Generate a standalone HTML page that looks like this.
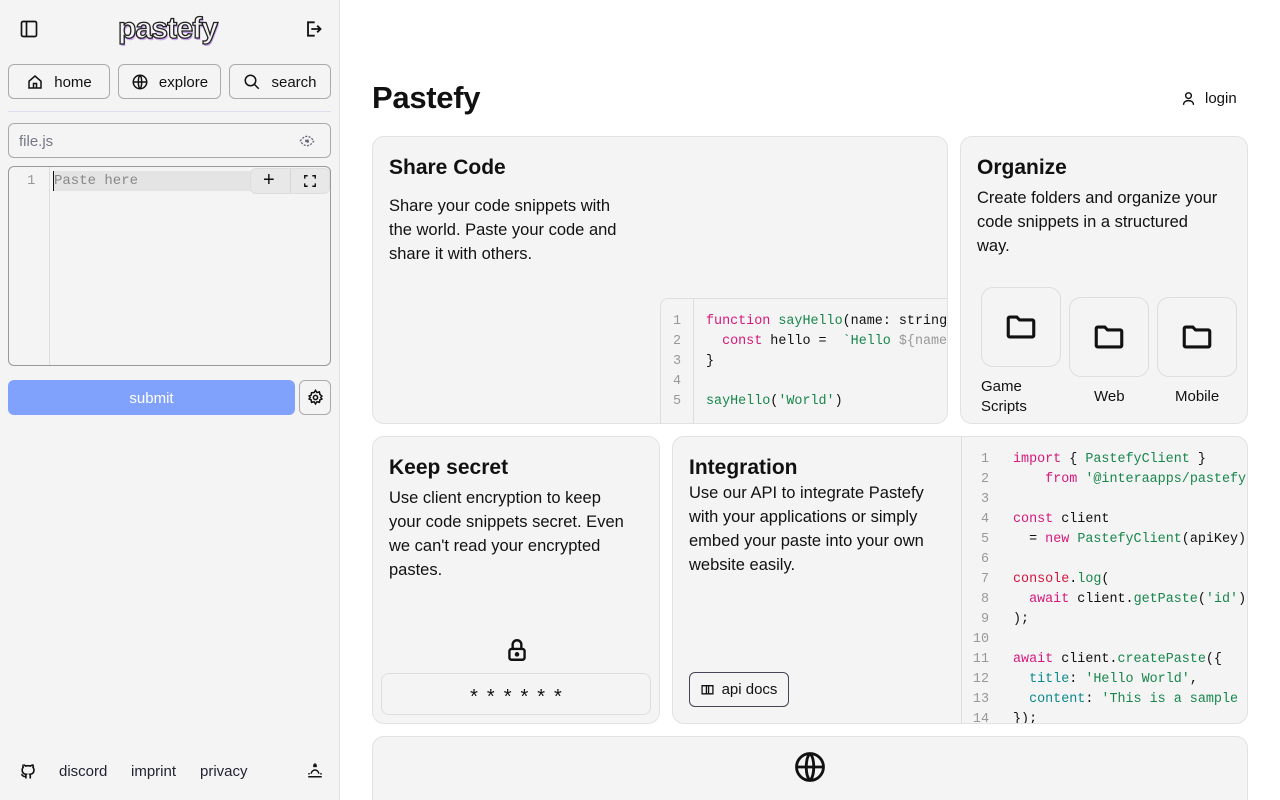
<!DOCTYPE html>
<html><head><meta charset="utf-8"><style>
*{box-sizing:border-box;margin:0;padding:0}
html{overflow:hidden;width:1280px;height:800px}
body{width:1280px;height:800px;overflow:hidden;font-family:"Liberation Sans",sans-serif;background:#fff;color:#111;position:relative}
.side{position:absolute;left:0;top:0;width:340px;height:800px;background:#f4f4f4;border-right:1px solid #e2e2e2}
.abs{position:absolute}
.btn{position:absolute;height:35px;border:1px solid #aaa;border-radius:6px;display:flex;align-items:center;justify-content:center;gap:10px;font-size:15px;color:#111;padding-top:1px}
svg{display:block}
.mono{font-family:"Liberation Mono",monospace}
.card{position:absolute;background:#f4f4f4;border:1px solid #e2e2e2;border-radius:12px;overflow:hidden}
.card h2{position:absolute;left:16px;top:19px;font-size:21px;font-weight:bold}
.card p{position:absolute;left:16px;font-size:16.5px;line-height:24px;color:#111}
.code{position:absolute;font-family:"Liberation Mono",monospace;font-size:13.4px;line-height:20px;white-space:pre}
.ln{color:#999;text-align:right}
.k{color:#d6197a}.f{color:#18864b}.c{color:#0b8a8a}.g{color:#999}.r{color:#d1173d}
.fold{position:absolute;width:80px;height:80px;border:1px solid #ddd;border-radius:12px;display:flex;align-items:center;justify-content:center}
.fl{position:absolute;font-size:15px;line-height:20px}
</style></head><body>
<div class="side">
  <svg class="abs" style="left:19px;top:19px" width="20" height="20" viewBox="0 0 24 24" fill="none" stroke="#111" stroke-width="2"><rect x="3" y="3" width="18" height="18" rx="2"/><line x1="9" y1="3" x2="9" y2="21"/></svg>
  <div class="abs" style="left:118px;top:12px;font-size:30px;font-weight:bold;color:#f4f4f4;-webkit-text-stroke:1.3px #222;text-shadow:1px 2px 0 #c9a4f0;letter-spacing:-0.8px">pastefy</div>
  <svg class="abs" style="left:303px;top:19px" width="20" height="20" viewBox="0 0 24 24" fill="none" stroke="#111" stroke-width="2.2"><path d="M14 4H6v16h8"/><path d="M10 12h11M17 8l4 4-4 4"/></svg>
  <div class="btn" style="left:8px;top:64px;width:102px"><svg width="18" height="18" viewBox="0 0 24 24" fill="none" stroke="#111" stroke-width="2"><path d="M4 11l8-7 8 7v9H4z"/><path d="M10 20v-6h4v6"/></svg>home</div>
  <div class="btn" style="left:118px;top:64px;width:103px"><svg width="18" height="18" viewBox="0 0 24 24" fill="none" stroke="#111" stroke-width="2"><circle cx="12" cy="12" r="9"/><path d="M3 12h18M12 3c3 3 3 15 0 18M12 3c-3 3-3 15 0 18"/></svg>explore</div>
  <div class="btn" style="left:229px;top:64px;width:102px"><svg width="18" height="18" viewBox="0 0 24 24" fill="none" stroke="#111" stroke-width="2"><circle cx="10" cy="10" r="7"/><path d="M15 15l6 6"/></svg>search</div>
  <div class="abs" style="left:8px;top:111px;width:323px;height:1px;background:#dde"></div>
  <div class="abs" style="left:8px;top:123px;width:323px;height:35px;border:1px solid #aaa;border-radius:6px;font-size:15px;color:#778;padding:9px 10px">file.js</div>
  <svg class="abs" style="left:299px;top:133px" width="16" height="16" viewBox="0 0 24 24" fill="none" stroke="#667" stroke-width="2" stroke-dasharray="3 2"><path d="M2 12s4-7 10-7 10 7 10 7-4 7-10 7S2 12 2 12z"/><circle cx="12" cy="12" r="2" fill="#667"/></svg>
  <div class="abs" style="left:8px;top:166px;width:323px;height:200px;border:1px solid #999;border-radius:6px;overflow:hidden">
    <div class="abs" style="left:40px;top:0;width:1px;height:200px;background:#ddd"></div>
    <div class="abs mono" style="left:18px;top:6px;font-size:14px;color:#999">1</div>
    <div class="abs mono" style="left:44px;top:4px;width:270px;height:20px;background:#e4e4e4;font-size:14px;color:#888;padding:2px 0 0 0;border-left:1.5px solid #111">Paste here</div>
    <div class="abs" style="left:241px;top:1px;width:80px;height:26px;background:#e8e8e8;border:1px solid #ddd;border-radius:6px"></div>
    <div class="abs" style="left:281px;top:2px;width:1px;height:24px;background:#d6d6d6"></div>
    <div class="abs" style="left:254px;top:2px;font-size:20px">+</div>
    <svg class="abs" style="left:294px;top:7px" width="14" height="14" viewBox="0 0 24 24" fill="none" stroke="#111" stroke-width="2.4"><path d="M3 8V3h5M16 3h5v5M21 16v5h-5M8 21H3v-5"/></svg>
  </div>
  <div class="abs" style="left:8px;top:380px;width:287px;height:35px;background:#81a2fc;border-radius:6px;color:#fff;font-size:15px;text-align:center;line-height:37px">submit</div>
  <div class="abs" style="left:299px;top:380px;width:32px;height:35px;border:1px solid #aaa;border-radius:6px"><svg style="margin:8px 7px" width="17" height="17" viewBox="0 0 24 24" fill="none" stroke="#111" stroke-width="2.2"><circle cx="12" cy="12" r="3"/><path d="M12 2l2 3 3.5-.8.8 3.5L21 10l-1.5 2 1.5 2-2.7 1.3-.8 3.5L14 18l-2 3-2-3-3.5.8-.8-3.5L3 14l1.5-2L3 10l2.7-1.3.8-3.5L10 5z"/></svg></div>
  <svg class="abs" style="left:19px;top:762px" width="18" height="18" viewBox="0 0 24 24" fill="none" stroke="#111" stroke-width="2.2"><path d="M9 19c-4 1.5-4-2-6-2.5M15 22v-3.5c0-1 .1-1.4-.5-2 2.8-.3 5.5-1.4 5.5-6a4.6 4.6 0 0 0-1.3-3.2 4.2 4.2 0 0 0-.1-3.2s-1-.3-3.4 1.3a11.6 11.6 0 0 0-6.2 0C6.6 3.8 5.6 4.1 5.6 4.1a4.2 4.2 0 0 0-.1 3.2A4.6 4.6 0 0 0 4.2 10.5c0 4.6 2.7 5.7 5.5 6-.6.6-.6 1.2-.5 2V22"/></svg>
  <div class="abs" style="left:59px;top:763px;font-size:15px;color:#223">discord</div>
  <div class="abs" style="left:131px;top:763px;font-size:15px;color:#223">imprint</div>
  <div class="abs" style="left:200px;top:763px;font-size:15px;color:#223">privacy</div>
  <svg class="abs" style="left:306px;top:761px" width="18" height="18" viewBox="0 0 24 24" fill="none" stroke="#111" stroke-width="2"><path d="M3 21h18M3 17h2M19 17h2M7 17a5 5 0 0 1 10 0M12 3v5M9.5 5.5l5 0M10 8l2-2 2 2"/></svg>
</div>

<div class="abs" style="left:372px;top:80px;font-size:31px;font-weight:bold;letter-spacing:-0.3px">Pastefy</div>
<svg class="abs" style="left:1180px;top:90px" width="17" height="17" viewBox="0 0 24 24" fill="none" stroke="#111" stroke-width="2"><circle cx="12" cy="8" r="4"/><path d="M5 21c0-4 3-6 7-6s7 2 7 6"/></svg>
<div class="abs" style="left:1205px;top:90px;font-size:15px">login</div>

<div class="card" style="left:372px;top:136px;width:576px;height:288px">
  <h2>Share Code</h2>
  <p style="top:57px;width:238px">Share your code snippets with the world. Paste your code and share it with others.</p>
  <div class="abs" style="left:287px;top:161px;width:300px;height:140px;border:1px solid #ddd;border-radius:8px;background:#f4f4f4">
    <div class="abs" style="left:32px;top:0;width:1px;height:140px;background:#ddd"></div>
    <div class="code ln" style="left:6px;top:13px;width:14px">1
2
3
4
5</div>
    <div class="code" style="left:45px;top:13px"><span class="k">function</span> <span class="f">sayHello</span>(name: string
  <span class="k">const</span> hello =  <span class="f">`Hello </span><span class="g">${name</span>
}

<span class="f">sayHello</span>(<span class="f">'World'</span>)</div>
  </div>
</div>

<div class="card" style="left:960px;top:136px;width:288px;height:288px">
  <h2>Organize</h2>
  <p style="top:49px;width:270px">Create folders and organize your<br>code snippets in a structured<br>way.</p>
  <div class="fold" style="left:20px;top:150px"><svg width="34" height="34" viewBox="0 0 24 24" fill="none" stroke="#111" stroke-width="2.2"><path d="M3 6a1 1 0 0 1 1-1h5l2 2h9a1 1 0 0 1 1 1v10a1 1 0 0 1-1 1H4a1 1 0 0 1-1-1z"/></svg></div>
  <div class="fold" style="left:108px;top:160px"><svg width="34" height="34" viewBox="0 0 24 24" fill="none" stroke="#111" stroke-width="2.2"><path d="M3 6a1 1 0 0 1 1-1h5l2 2h9a1 1 0 0 1 1 1v10a1 1 0 0 1-1 1H4a1 1 0 0 1-1-1z"/></svg></div>
  <div class="fold" style="left:196px;top:160px"><svg width="34" height="34" viewBox="0 0 24 24" fill="none" stroke="#111" stroke-width="2.2"><path d="M3 6a1 1 0 0 1 1-1h5l2 2h9a1 1 0 0 1 1 1v10a1 1 0 0 1-1 1H4a1 1 0 0 1-1-1z"/></svg></div>
  <div class="fl" style="left:20px;top:240px">Game<br>Scripts</div>
  <div class="fl" style="left:133px;top:250px">Web</div>
  <div class="fl" style="left:214px;top:250px">Mobile</div>
</div>

<div class="card" style="left:372px;top:436px;width:288px;height:288px">
  <h2>Keep secret</h2>
  <p style="top:49px;width:240px">Use client encryption to keep your code snippets secret. Even we can't read your encrypted pastes.</p>
  <svg class="abs" style="left:131px;top:199px" width="26" height="28" viewBox="0 0 24 24" fill="none" stroke="#111" stroke-width="2.2"><rect x="5" y="11" width="14" height="10" rx="2"/><path d="M8 11V7a4 4 0 0 1 8 0v4"/><circle cx="12" cy="16" r="1" fill="#111"/></svg>
  <div class="abs" style="left:8px;top:236px;width:270px;height:42px;border:1px solid #ddd;border-radius:8px;text-align:center;line-height:46px;font-size:20px;letter-spacing:9px;padding-left:9px">******</div>
</div>

<div class="card" style="left:672px;top:436px;width:576px;height:288px">
  <h2>Integration</h2>
  <p style="top:44px;width:260px">Use our API to integrate Pastefy with your applications or simply embed your paste into your own website easily.</p>
  <div class="abs" style="left:16px;top:235px;width:100px;height:35px;border:1px solid #445;border-radius:6px;font-size:15px;display:flex;align-items:center;justify-content:center;gap:8px"><svg width="13" height="13" viewBox="0 0 24 24" fill="none" stroke="#111" stroke-width="2.4"><path d="M2 5h8v15H2zM14 5h8v15h-8zM10 5h4M10 20h4"/></svg>api docs</div>
  <div class="abs" style="left:288px;top:0;width:1px;height:288px;background:#ddd"></div>
  <div class="code ln" style="left:292px;top:13px;width:24px">1
2
3
4
5
6
7
8
9
10
11
12
13
14</div>
  <div class="code" style="left:340px;top:13px"><span class="k">import</span> { <span class="f">PastefyClient</span> }
    <span class="k">from</span> <span class="f">'@interaapps/pastefy</span>

<span class="k">const</span> client
  = <span class="k">new</span> <span class="f">PastefyClient</span>(apiKey)

<span class="r">console</span>.<span class="f">log</span>(
  <span class="k">await</span> client.<span class="f">getPaste</span>(<span class="f">'id'</span>)
);

<span class="k">await</span> client.<span class="f">createPaste</span>({
  <span class="c">title</span>: <span class="f">'Hello World'</span>,
  <span class="c">content</span>: <span class="f">'This is a sample p</span>
});</div>
</div>

<div class="card" style="left:372px;top:736px;width:876px;height:64px;border-bottom:none;border-bottom-left-radius:0;border-bottom-right-radius:0">
  <svg class="abs" style="left:420px;top:13px" width="34" height="34" viewBox="0 0 24 24" fill="none" stroke="#111" stroke-width="2"><circle cx="12" cy="12" r="9.5"/><path d="M2.5 12h19M12 2.5c3.5 3.5 3.5 15.5 0 19M12 2.5c-3.5 3.5-3.5 15.5 0 19"/></svg>
</div>
</body></html>
